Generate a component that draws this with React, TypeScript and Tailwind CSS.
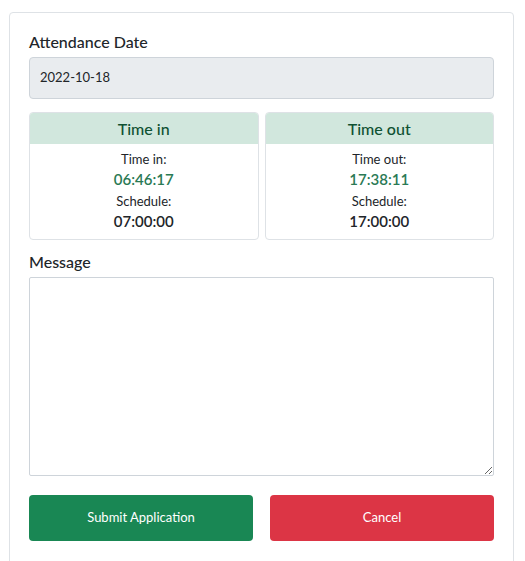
import React, { useState } from 'react';

interface TimeCardProps {
    title: string;
    label: string;
    actual: string;
    schedule: string;
}

const TimeCard: React.FC<TimeCardProps> = ({ title, label, actual, schedule }) => (
    <div className="flex-1 overflow-hidden rounded-[4px] border border-[#dee2e6]">
        <div className="flex h-[31px] items-center justify-center bg-[#d1e7dd] text-[16px] font-medium text-[#0f5132]">
            {title}
        </div>
        <div className="flex flex-col items-center pb-[8px] pt-[6px] text-[#212529]">
            <div className="text-[13px] leading-[19px]">{label}</div>
            <div className="text-[15px] font-semibold leading-[20px] text-[#2a7a55]">{actual}</div>
            <div className="mt-[3px] text-[13px] leading-[19px]">Schedule:</div>
            <div className="text-[15px] font-semibold leading-[20px]">{schedule}</div>
        </div>
    </div>
);

export default function App() {
    const [message, setMessage] = useState('');

    return (
        <div className="h-[561px] overflow-hidden bg-white pl-[9px] pr-[11px] pt-[12px] font-['Lato','Noto_Sans',sans-serif] text-[#212529]">
            <div className="h-[600px] rounded-[4px] border border-[#dee2e6] px-[19px] pt-[17px]">
                <label className="block text-[16px] font-medium leading-[24px]">Attendance Date</label>
                <div className="mt-[3px] flex h-[42px] items-center rounded-[4px] border border-[#ced4da] bg-[#e9ecef] px-[10px] text-[13px]">
                    2022-10-18
                </div>

                <div className="mt-[13px] flex gap-[6px]">
                    <TimeCard title="Time in" label="Time in:" actual="06:46:17" schedule="07:00:00" />
                    <TimeCard title="Time out" label="Time out:" actual="17:38:11" schedule="17:00:00" />
                </div>

                <label className="mt-[10px] block text-[16px] font-medium leading-[24px]">Message</label>
                <textarea
                    value={message}
                    onChange={(e) => setMessage(e.target.value)}
                    className="mt-[3px] block h-[199px] w-full rounded-[2px] border border-[#ced4da] bg-white p-2 text-[13px] outline-none"
                />

                <div className="mt-[19px] flex gap-[17px]">
                    <button className="h-[46px] flex-1 rounded-[4px] bg-[#198754] text-[13px] text-white">
                        Submit Application
                    </button>
                    <button className="h-[46px] flex-1 rounded-[4px] bg-[#dc3545] text-[13px] text-white">
                        Cancel
                    </button>
                </div>
            </div>
        </div>
    );
}
